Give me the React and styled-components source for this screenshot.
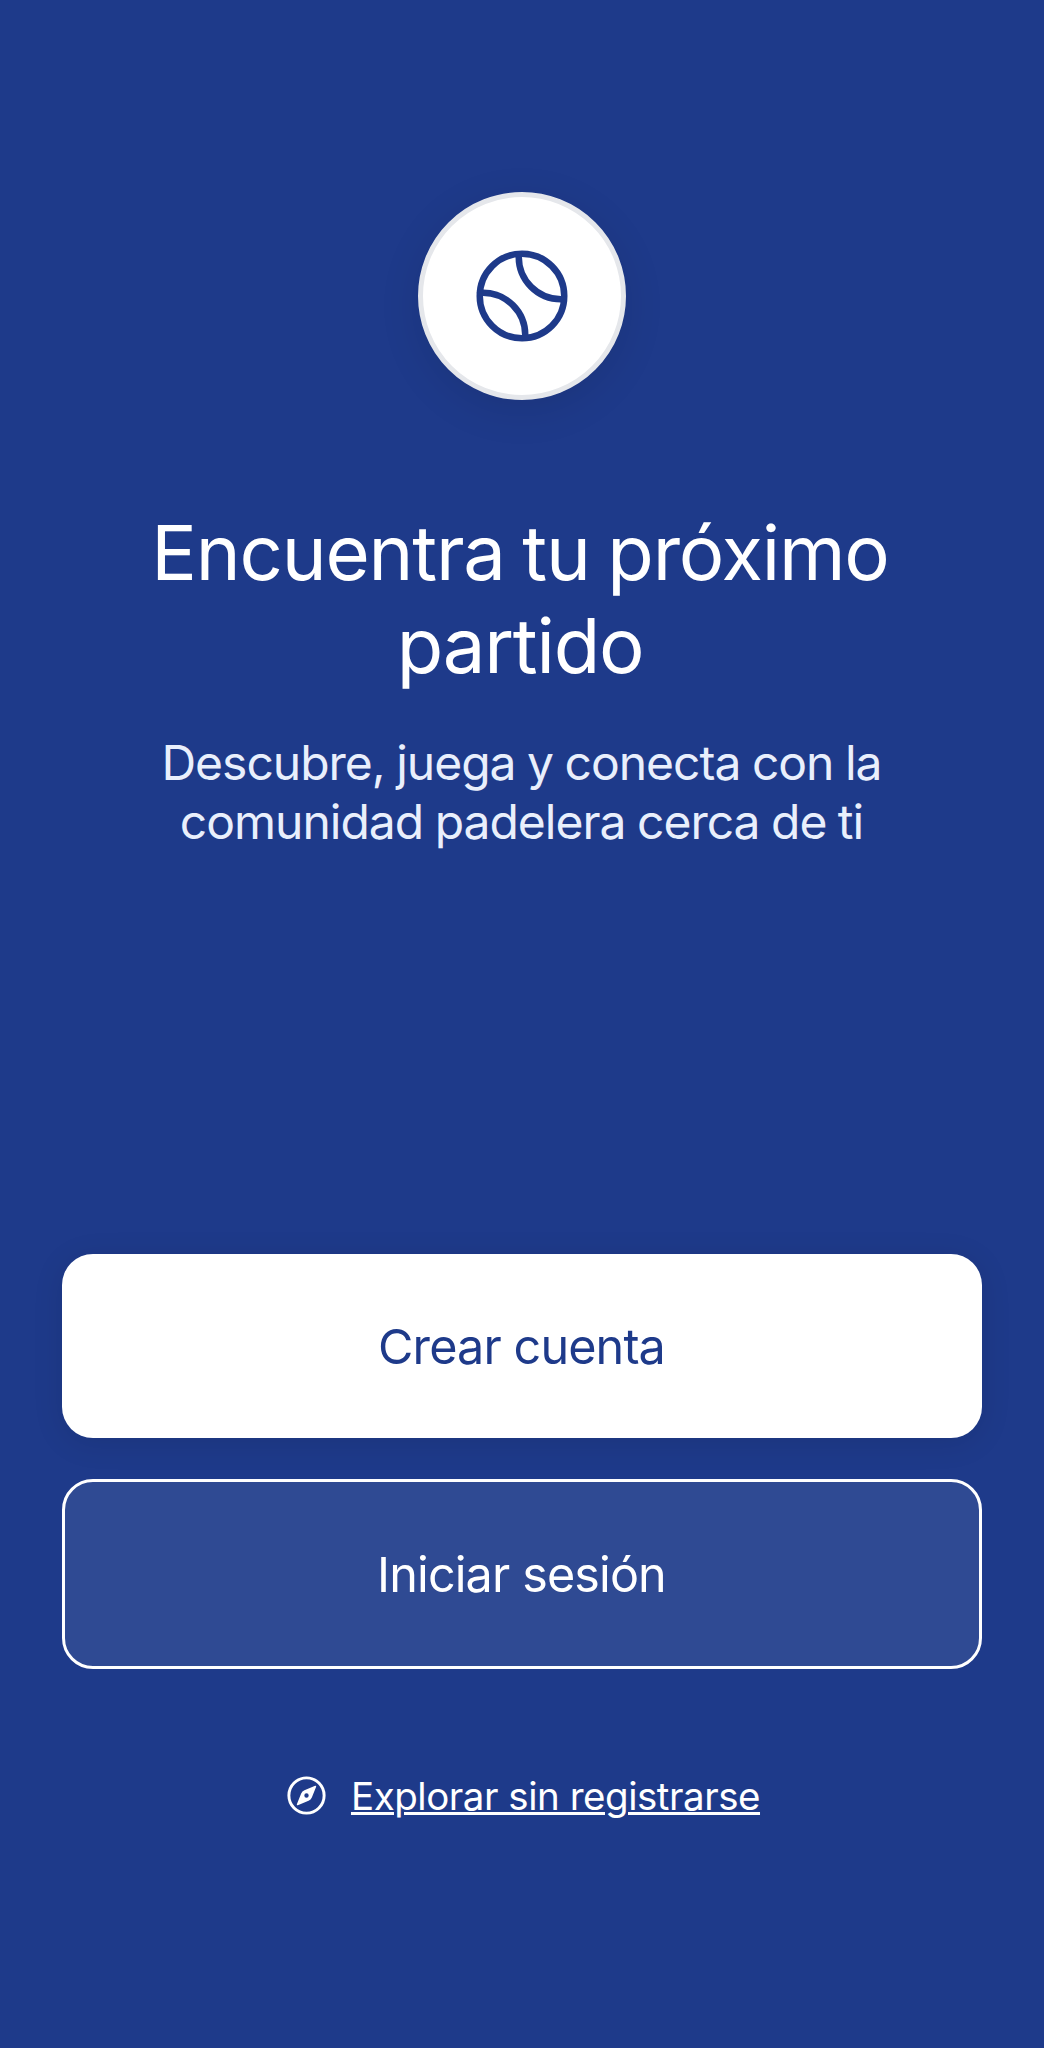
import React from "react";
import styled, { createGlobalStyle } from "styled-components";
import { IoCompassOutline, IoTennisballOutline } from "react-icons/io5";

const GlobalStyle = createGlobalStyle`
  *, *::before, *::after { box-sizing: border-box; }
  body {
    margin: 0;
    background: #1e3a8a;
    font-family: Inter, "Liberation Sans", sans-serif;
    -webkit-font-smoothing: antialiased;
  }
`;

const Screen = styled.main`
  display: flex;
  flex-direction: column;
  min-height: 100vh;
  padding: 192px 62.3px 0;
  background: #1e3a8a;
  color: #fff;
`;

const Hero = styled.section`
  display: flex;
  flex-direction: column;
  align-items: center;
  height: 1062px;
  text-align: center;
`;

const Logo = styled.div`
  display: flex;
  align-items: center;
  justify-content: center;
  width: 208px;
  height: 208px;
  border: 5px solid #e5e7eb;
  border-radius: 50%;
  background: #fff;
  color: #1e3a8a;
  box-shadow: 0 10px 42px rgba(0, 0, 0, 0.1);

  svg { display: block; width: 104px; height: 104px; }
`;

const Title = styled.h1`
  margin: 106px 0 0;
  padding-right: 4px;
  width: 800px;
  font-size: 76px;
  font-weight: 400;
  line-height: 93px;
  letter-spacing: -1.2px;
  word-spacing: -2.6px;
`;

const Subtitle = styled.p`
  margin: 41px 0 0;
  padding-right: 1px;
  width: 780px;
  color: #e9effc;
  font-size: 48px;
  line-height: 59px;
  letter-spacing: -1px;
  word-spacing: -1px;
`;

const Actions = styled.section`
  display: flex;
  flex-direction: column;
  gap: 41px;
`;

const Button = styled.button`
  height: ${(p) => (p.$outlined ? "190px" : "184px")};
  padding: 0 1px 0 0;
  border: ${(p) => (p.$outlined ? "3px solid #fff" : "0")};
  border-radius: 31px;
  background: ${(p) => (p.$outlined ? "#2f4a93" : "#fff")};
  color: ${(p) => (p.$outlined ? "#fff" : "#1e3a8a")};
  box-shadow: ${(p) => (p.$outlined ? "none" : "0 5px 31px rgba(0, 0, 0, 0.1)")};
  font: 400 48.5px/59px Inter, "Liberation Sans", sans-serif;
  letter-spacing: -0.87px;
`;

const GuestLink = styled.a`
  display: flex;
  align-items: center;
  align-self: center;
  gap: 21px;
  margin-top: 103px;
  padding-right: 1px;
  color: #fff;
  font-size: 38.5px;
  line-height: 48px;
  letter-spacing: -0.47px;

  svg { display: block; width: 47px; height: 47px; margin-bottom: 1px; }

  span {
    text-decoration: underline;
    text-decoration-thickness: 3px;
    text-underline-offset: 2px;
  }
`;

export default function App() {
  return (
    <>
      <GlobalStyle />
      <Screen>
        <Hero>
          <Logo><IoTennisballOutline /></Logo>
          <Title>Encuentra tu próximo partido</Title>
          <Subtitle>Descubre, juega y conecta con la comunidad padelera cerca de ti</Subtitle>
        </Hero>
        <Actions>
          <Button>Crear cuenta</Button>
          <Button $outlined>Iniciar sesión</Button>
        </Actions>
        <GuestLink>
          <IoCompassOutline />
          <span>Explorar sin registrarse</span>
        </GuestLink>
      </Screen>
    </>
  );
}
